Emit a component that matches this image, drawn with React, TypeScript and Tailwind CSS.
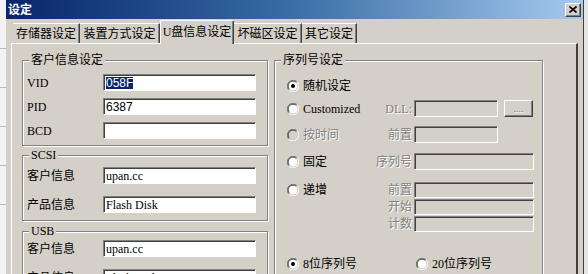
import React from "react";

const GRAY = "text-[#808080] [text-shadow:1px_1px_0_#fff]";

function Radio({ checked = false, disabled = false }: { checked?: boolean; disabled?: boolean }) {
  return (
    <svg width="12" height="12" viewBox="0 0 12 12" className="shrink-0">
      <circle cx="6" cy="6" r="5" fill={disabled ? "#d4d0c8" : "#fff"} />
      <path d="M10.24 1.76 A6 6 0 0 0 1.76 10.24" stroke="#808080" strokeWidth="1" fill="none" />
      <path d="M9.5 2.5 A4.95 4.95 0 0 0 2.5 9.5" stroke="#404040" strokeWidth="1" fill="none" />
      <path d="M1.76 10.24 A6 6 0 0 0 10.24 1.76" stroke="#fff" strokeWidth="1" fill="none" />
      <path d="M2.5 9.5 A4.95 4.95 0 0 0 9.5 2.5" stroke="#d4d0c8" strokeWidth="1" fill="none" />
      {checked && <circle cx="6" cy="6" r="2" fill={disabled ? "#808080" : "#000"} />}
    </svg>
  );
}

function Edit({ children, disabled = false, className = "" }: { children?: React.ReactNode; disabled?: boolean; className?: string }) {
  return (
    <div
      className={`flex h-[17px] items-center border border-t-[#808080] border-l-[#808080] border-b-white border-r-white pl-[2px] text-[12px] leading-none shadow-[inset_1px_1px_0_#404040] ${disabled ? "bg-[#d4d0c8]" : "bg-white"} ${className}`}
    >
      {children}
    </div>
  );
}

function Group({ title, className = "", children }: { title: string; className?: string; children: React.ReactNode }) {
  return (
    <div className={`flex flex-col border border-[#808080] shadow-[inset_1px_1px_0_#fff,1px_1px_0_#fff] ${className}`}>
      <span className="-mt-[8px] ml-[6px] self-start bg-[#d4d0c8] px-[2px] text-[12px] leading-[14px]">{title}</span>
      {children}
    </div>
  );
}

function Field({ label, children }: { label: string; children: React.ReactNode }) {
  return (
    <div className="flex items-center">
      <span className="w-[76px] text-[12px] leading-none">{label}</span>
      <div className="flex-1">{children}</div>
    </div>
  );
}

function Option({ label, checked, disabled }: { label: string; checked?: boolean; disabled?: boolean }) {
  return (
    <div className="flex w-[89px] items-center gap-[4px]">
      <Radio checked={checked} disabled={disabled} />
      <span className={`text-[12px] leading-none ${disabled ? GRAY : ""}`}>{label}</span>
    </div>
  );
}

function Caption({ text }: { text: string }) {
  return <span className={`w-[36px] text-right text-[12px] leading-none ${GRAY}`}>{text}</span>;
}

function Tab({ label, w, active }: { label: string; w: string; active?: boolean }) {
  if (active) {
    return (
      <div
        className={`relative z-10 -mb-[1px] flex h-[24px] ${w} items-center justify-center rounded-t-[2px] border-l border-t border-r border-white border-r-[#404040] bg-[#d4d0c8] pb-[1px] text-[12px] shadow-[inset_-1px_0_0_#808080]`}
      >
        {label}
      </div>
    );
  }
  return (
    <div
      className={`flex h-[20px] ${w} items-center justify-center border-t border-r border-white border-r-[#404040] text-[12px] shadow-[inset_-1px_0_0_#808080]`}
    >
      {label}
    </div>
  );
}

export default function App() {
  return (
    <div className="flex h-[274px] w-[588px] overflow-hidden bg-[#d4d0c8] font-['Liberation_Serif','Noto_Sans_CJK_SC',serif] text-black">
      {/* desktop behind */}
      <div className="flex w-[6px] flex-col gap-[38px] bg-[#f3f3f3] pt-[48px]">
        <div className="h-px bg-[#b8b8b8]" />
        <div className="h-px bg-[#b8b8b8]" />
        <div className="h-px bg-[#b8b8b8]" />
        <div className="h-px bg-[#b8b8b8]" />
        <div className="h-px bg-[#b8b8b8]" />
      </div>

      <div className="flex w-[578px] flex-col border-r border-[#404040] bg-[#d4d0c8]">
        {/* title bar */}
        <div className="flex h-[19px] shrink-0 items-center justify-between bg-linear-to-r from-[#0a246a] via-[#3a6ea5] to-[#a6caf0] pl-[2px] pr-[2px]">
          <span className="text-[12px] font-bold leading-none text-white">设定</span>
          <div className="flex h-[14px] w-[16px] items-center justify-center border border-t-white border-l-white border-b-[#404040] border-r-[#404040] bg-[#d4d0c8] shadow-[inset_-1px_-1px_0_#808080]">
            <svg width="8" height="7" viewBox="0 0 8 7">
              <path d="M0.5 0.5 L7.5 6.5 M7.5 0.5 L0.5 6.5" stroke="#000" strokeWidth="1.6" />
            </svg>
          </div>
        </div>

        <div className="flex flex-1 flex-col px-[5px]">
          {/* tabs */}
          <div className="flex h-[24px] shrink-0 items-end pl-[2px]">
            <Tab label="存储器设定" w="w-[67px]" />
            <Tab label="装置方式设定" w="w-[80px]" />
            <Tab label="U盘信息设定" w="w-[74px]" active />
            <Tab label="坏磁区设定" w="w-[68px]" />
            <Tab label="其它设定" w="w-[55px]" />
          </div>

          {/* panel */}
          <div className="flex flex-1 gap-[6px] border-l border-t border-r-2 border-white border-r-[#404040] pl-[10px] pt-[16px]">
            {/* left column */}
            <div className="flex w-[246px] flex-col">
              <Group title="客户信息设定" className="pb-[6px]">
                <div className="mt-[7px] flex flex-col gap-[7px] pl-[4px] pr-[11px]">
                  <Field label="VID">
                    <Edit>
                      <span className="bg-[#0a246a] font-['Liberation_Sans',sans-serif] text-white">058F</span>
                    </Edit>
                  </Field>
                  <Field label="PID">
                    <Edit>
                      <span className="font-['Liberation_Sans',sans-serif]">6387</span>
                    </Edit>
                  </Field>
                  <Field label="BCD">
                    <Edit />
                  </Field>
                </div>
              </Group>

              <Group title="SCSI" className="mt-[9px] pb-[7px]">
                <div className="mt-[5px] flex flex-col gap-[12px] pl-[4px] pr-[11px]">
                  <Field label="客户信息">
                    <Edit>upan.cc</Edit>
                  </Field>
                  <Field label="产品信息">
                    <Edit>Flash Disk</Edit>
                  </Field>
                </div>
              </Group>

              <Group title="USB" className="mt-[10px] pb-[10px]">
                <div className="mt-[2px] flex flex-col gap-[12px] pl-[4px] pr-[11px]">
                  <Field label="客户信息">
                    <Edit>upan.cc</Edit>
                  </Field>
                  <Field label="产品信息">
                    <Edit>Flash Disk</Edit>
                  </Field>
                </div>
              </Group>
            </div>

            {/* right column */}
            <Group title="序列号设定" className="w-[269px] self-start pb-[20px]">
              <div className="mt-[10px] flex flex-col pl-[12px]">
                <div className="flex h-[17px] items-center">
                  <Option label="随机设定" checked />
                </div>

                <div className="mt-[6px] flex h-[17px] items-center">
                  <Option label="Customized" />
                  <Caption text="DLL:" />
                  <Edit disabled className="ml-[2px] w-[84px]" />
                  <div className="ml-[6px] flex h-[17px] w-[29px] items-center justify-center border border-t-white border-l-white border-b-[#404040] border-r-[#404040] shadow-[inset_-1px_-1px_0_#808080]">
                    <span className={`text-[10px] leading-none ${GRAY}`}>....</span>
                  </div>
                </div>

                <div className="mt-[9px] flex h-[17px] items-center">
                  <Option label="按时间" disabled />
                  <Caption text="前置" />
                  <Edit disabled className="ml-[2px] w-[84px]" />
                </div>

                <div className="mt-[10px] flex h-[17px] items-center">
                  <Option label="固定" />
                  <Caption text="序列号" />
                  <Edit disabled className="ml-[2px] w-[120px]" />
                </div>

                <div className="mt-[12px] flex items-start">
                  <div className="flex h-[16px] items-center">
                    <Option label="递增" />
                  </div>
                  <div className="flex flex-col gap-[1px]">
                    <div className="flex h-[16px] items-center">
                      <Caption text="前置" />
                      <Edit disabled className="ml-[2px] !h-[16px] w-[120px]" />
                    </div>
                    <div className="flex h-[16px] items-center">
                      <Caption text="开始" />
                      <Edit disabled className="ml-[2px] !h-[16px] w-[120px]" />
                    </div>
                    <div className="flex h-[16px] items-center">
                      <Caption text="计数" />
                      <Edit disabled className="ml-[2px] !h-[16px] w-[120px]" />
                    </div>
                  </div>
                </div>

                <div className="mt-[23px] flex h-[17px] items-center">
                  <div className="flex w-[129px] items-center gap-[4px]">
                    <Radio checked />
                    <span className="text-[12px] leading-none">8位序列号</span>
                  </div>
                  <div className="flex items-center gap-[4px]">
                    <Radio />
                    <span className="text-[12px] leading-none">20位序列号</span>
                  </div>
                </div>
              </div>
            </Group>
          </div>
        </div>
      </div>

      <div className="w-[4px] bg-[#e4e4e4]" />
    </div>
  );
}
